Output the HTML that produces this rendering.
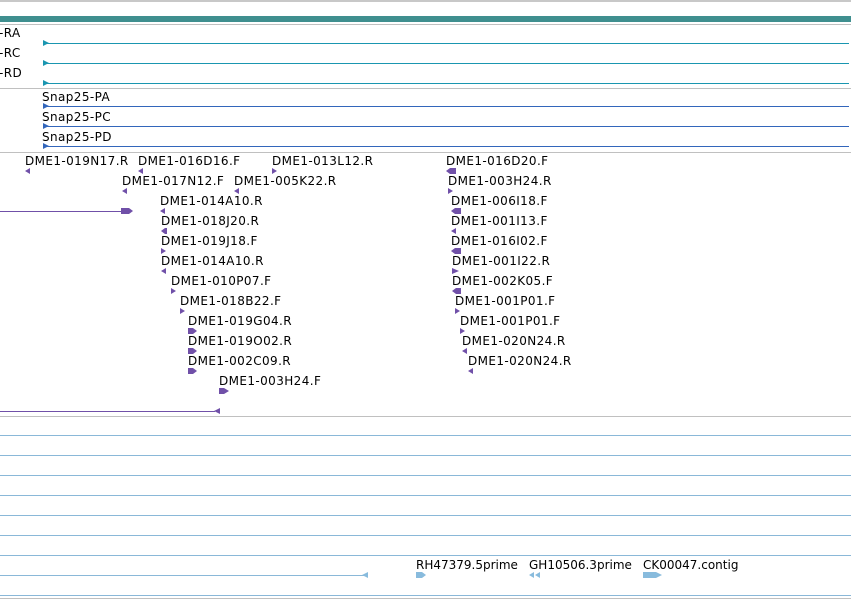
<!DOCTYPE html>
<html><head><meta charset="utf-8"><style>
html,body{margin:0;padding:0;background:#fff;width:851px;height:600px;overflow:hidden}
svg{display:block}
text{font-family:"DejaVu Sans","Liberation Sans",sans-serif;font-size:12px;letter-spacing:0.4px;fill:#000}
</style></head><body>
<svg width="851" height="600" viewBox="0 0 851 600" xmlns="http://www.w3.org/2000/svg">
<g shape-rendering="crispEdges">
<rect x="0" y="0" width="851" height="2" fill="#c8c8c8"/>
<rect x="0" y="16" width="851" height="6" fill="#3f8f8f"/>
<rect x="0" y="24" width="851" height="1" fill="#c0c0c0"/>
<rect x="43" y="43" width="806" height="1" fill="#1a96b0"/>
<rect x="43" y="63" width="806" height="1" fill="#1a96b0"/>
<rect x="43" y="83" width="806" height="1" fill="#1a96b0"/>
<rect x="0" y="88" width="851" height="1" fill="#c0c0c0"/>
<rect x="43" y="106" width="806" height="1" fill="#3366bb"/>
<rect x="43" y="126" width="806" height="1" fill="#3366bb"/>
<rect x="43" y="146" width="806" height="1" fill="#3366bb"/>
<rect x="0" y="152" width="851" height="1" fill="#c0c0c0"/>
<rect x="0" y="211" width="122" height="1" fill="#7050a8"/>
<rect x="0" y="411" width="215" height="1" fill="#7050a8"/>
<rect x="0" y="416" width="851" height="1" fill="#c0c0c0"/>
<rect x="0" y="435" width="851" height="1" fill="#8ab8d8"/>
<rect x="0" y="455" width="851" height="1" fill="#8ab8d8"/>
<rect x="0" y="475" width="851" height="1" fill="#8ab8d8"/>
<rect x="0" y="495" width="851" height="1" fill="#8ab8d8"/>
<rect x="0" y="515" width="851" height="1" fill="#8ab8d8"/>
<rect x="0" y="535" width="851" height="1" fill="#8ab8d8"/>
<rect x="0" y="555" width="851" height="1" fill="#8ab8d8"/>
<rect x="0" y="575" width="365" height="1" fill="#8ab8d8"/>
<rect x="0" y="595" width="851" height="1" fill="#8ab8d8"/>
<rect x="0" y="598" width="851" height="1" fill="#c0c0c0"/>
</g>
<g fill="#1a96b0">
<polygon points="43,40 49,43 43,46"/><polygon points="43,60 49,63 43,66"/><polygon points="43,80 49,83 43,86"/>
</g>
<g fill="#3366bb">
<polygon points="43,103 49,106 43,109"/><polygon points="43,123 49,126 43,129"/><polygon points="43,143 49,146 43,149"/>
</g>
<text x="-1" y="37">-RA</text><text x="-1" y="57">-RC</text><text x="-1" y="77">-RD</text>
<text x="42" y="101">Snap25-PA</text><text x="42" y="121">Snap25-PC</text><text x="42" y="141">Snap25-PD</text>
<g>
<text x="25" y="165">DME1-019N17.R</text><text x="138" y="165">DME1-016D16.F</text><text x="272" y="165">DME1-013L12.R</text><text x="446" y="165">DME1-016D20.F</text>
<text x="122" y="185">DME1-017N12.F</text><text x="234" y="185">DME1-005K22.R</text><text x="448" y="185">DME1-003H24.R</text>
<text x="160" y="205">DME1-014A10.R</text><text x="451" y="205">DME1-006I18.F</text>
<text x="161" y="225">DME1-018J20.R</text><text x="451" y="225">DME1-001I13.F</text>
<text x="161" y="245">DME1-019J18.F</text><text x="451" y="245">DME1-016I02.F</text>
<text x="161" y="265">DME1-014A10.R</text><text x="452" y="265">DME1-001I22.R</text>
<text x="171" y="285">DME1-010P07.F</text><text x="452" y="285">DME1-002K05.F</text>
<text x="180" y="305">DME1-018B22.F</text><text x="455" y="305">DME1-001P01.F</text>
<text x="188" y="325">DME1-019G04.R</text><text x="460" y="325">DME1-001P01.F</text>
<text x="188" y="345">DME1-019O02.R</text><text x="462" y="345">DME1-020N24.R</text>
<text x="188" y="365">DME1-002C09.R</text><text x="468" y="365">DME1-020N24.R</text>
<text x="219" y="385">DME1-003H24.F</text>
</g>
<g fill="#7050a8">
<polygon points="30,168 25,171 30,174"/><polygon points="143,168 138,171 143,174"/><polygon points="272,168 277,171 272,174"/>
<polygon points="446,171 450,168 456,168 456,174 450,174"/>
<polygon points="127,188 122,191 127,194"/><polygon points="239,188 234,191 239,194"/><polygon points="448,188 453,191 448,194"/>
<polygon points="121,208 129,208 133,211 129,214 121,214"/>
<polygon points="165,208 160,211 165,214"/><polygon points="451,211 455,208 461,208 461,214 455,214"/>
<polygon points="161,231 165,228 167,228 167,234 165,234"/><polygon points="456,228 451,231 456,234"/>
<polygon points="161,248 166,251 161,254"/><polygon points="451,251 455,248 461,248 461,254 455,254"/>
<polygon points="166,268 161,271 166,274"/><polygon points="452,268 459,271 452,274"/>
<polygon points="171,288 176,291 171,294"/><polygon points="452,291 456,288 461,288 461,294 456,294"/>
<polygon points="180,308 185,311 180,314"/><polygon points="455,308 460,311 455,314"/>
<polygon points="188,328 193,328 197,331 193,334 188,334"/><polygon points="460,328 465,331 460,334"/>
<polygon points="188,348 193,348 197,351 193,354 188,354"/><polygon points="467,348 462,351 467,354"/>
<polygon points="188,368 193,368 197,371 193,374 188,374"/><polygon points="473,368 468,371 473,374"/>
<polygon points="219,388 224,388 229,391 224,394 219,394"/>
<polygon points="220,408 214,411 220,414"/>
</g>
<g fill="#88bbdd">
<polygon points="368,572 362,575 368,578"/>
<polygon points="416,572 422,572 426,575 422,578 416,578"/>
<polygon points="534,572 529,575 534,578"/><polygon points="540,572 535,575 540,578"/>
<polygon points="643,572 656,572 662,575 656,578 643,578"/>
</g>
<text x="416" y="569" style="letter-spacing:0">RH47379.5prime</text><text x="529" y="569" style="letter-spacing:0">GH10506.3prime</text><text x="643" y="569" style="letter-spacing:0">CK00047.contig</text>
</svg>
</body></html>
